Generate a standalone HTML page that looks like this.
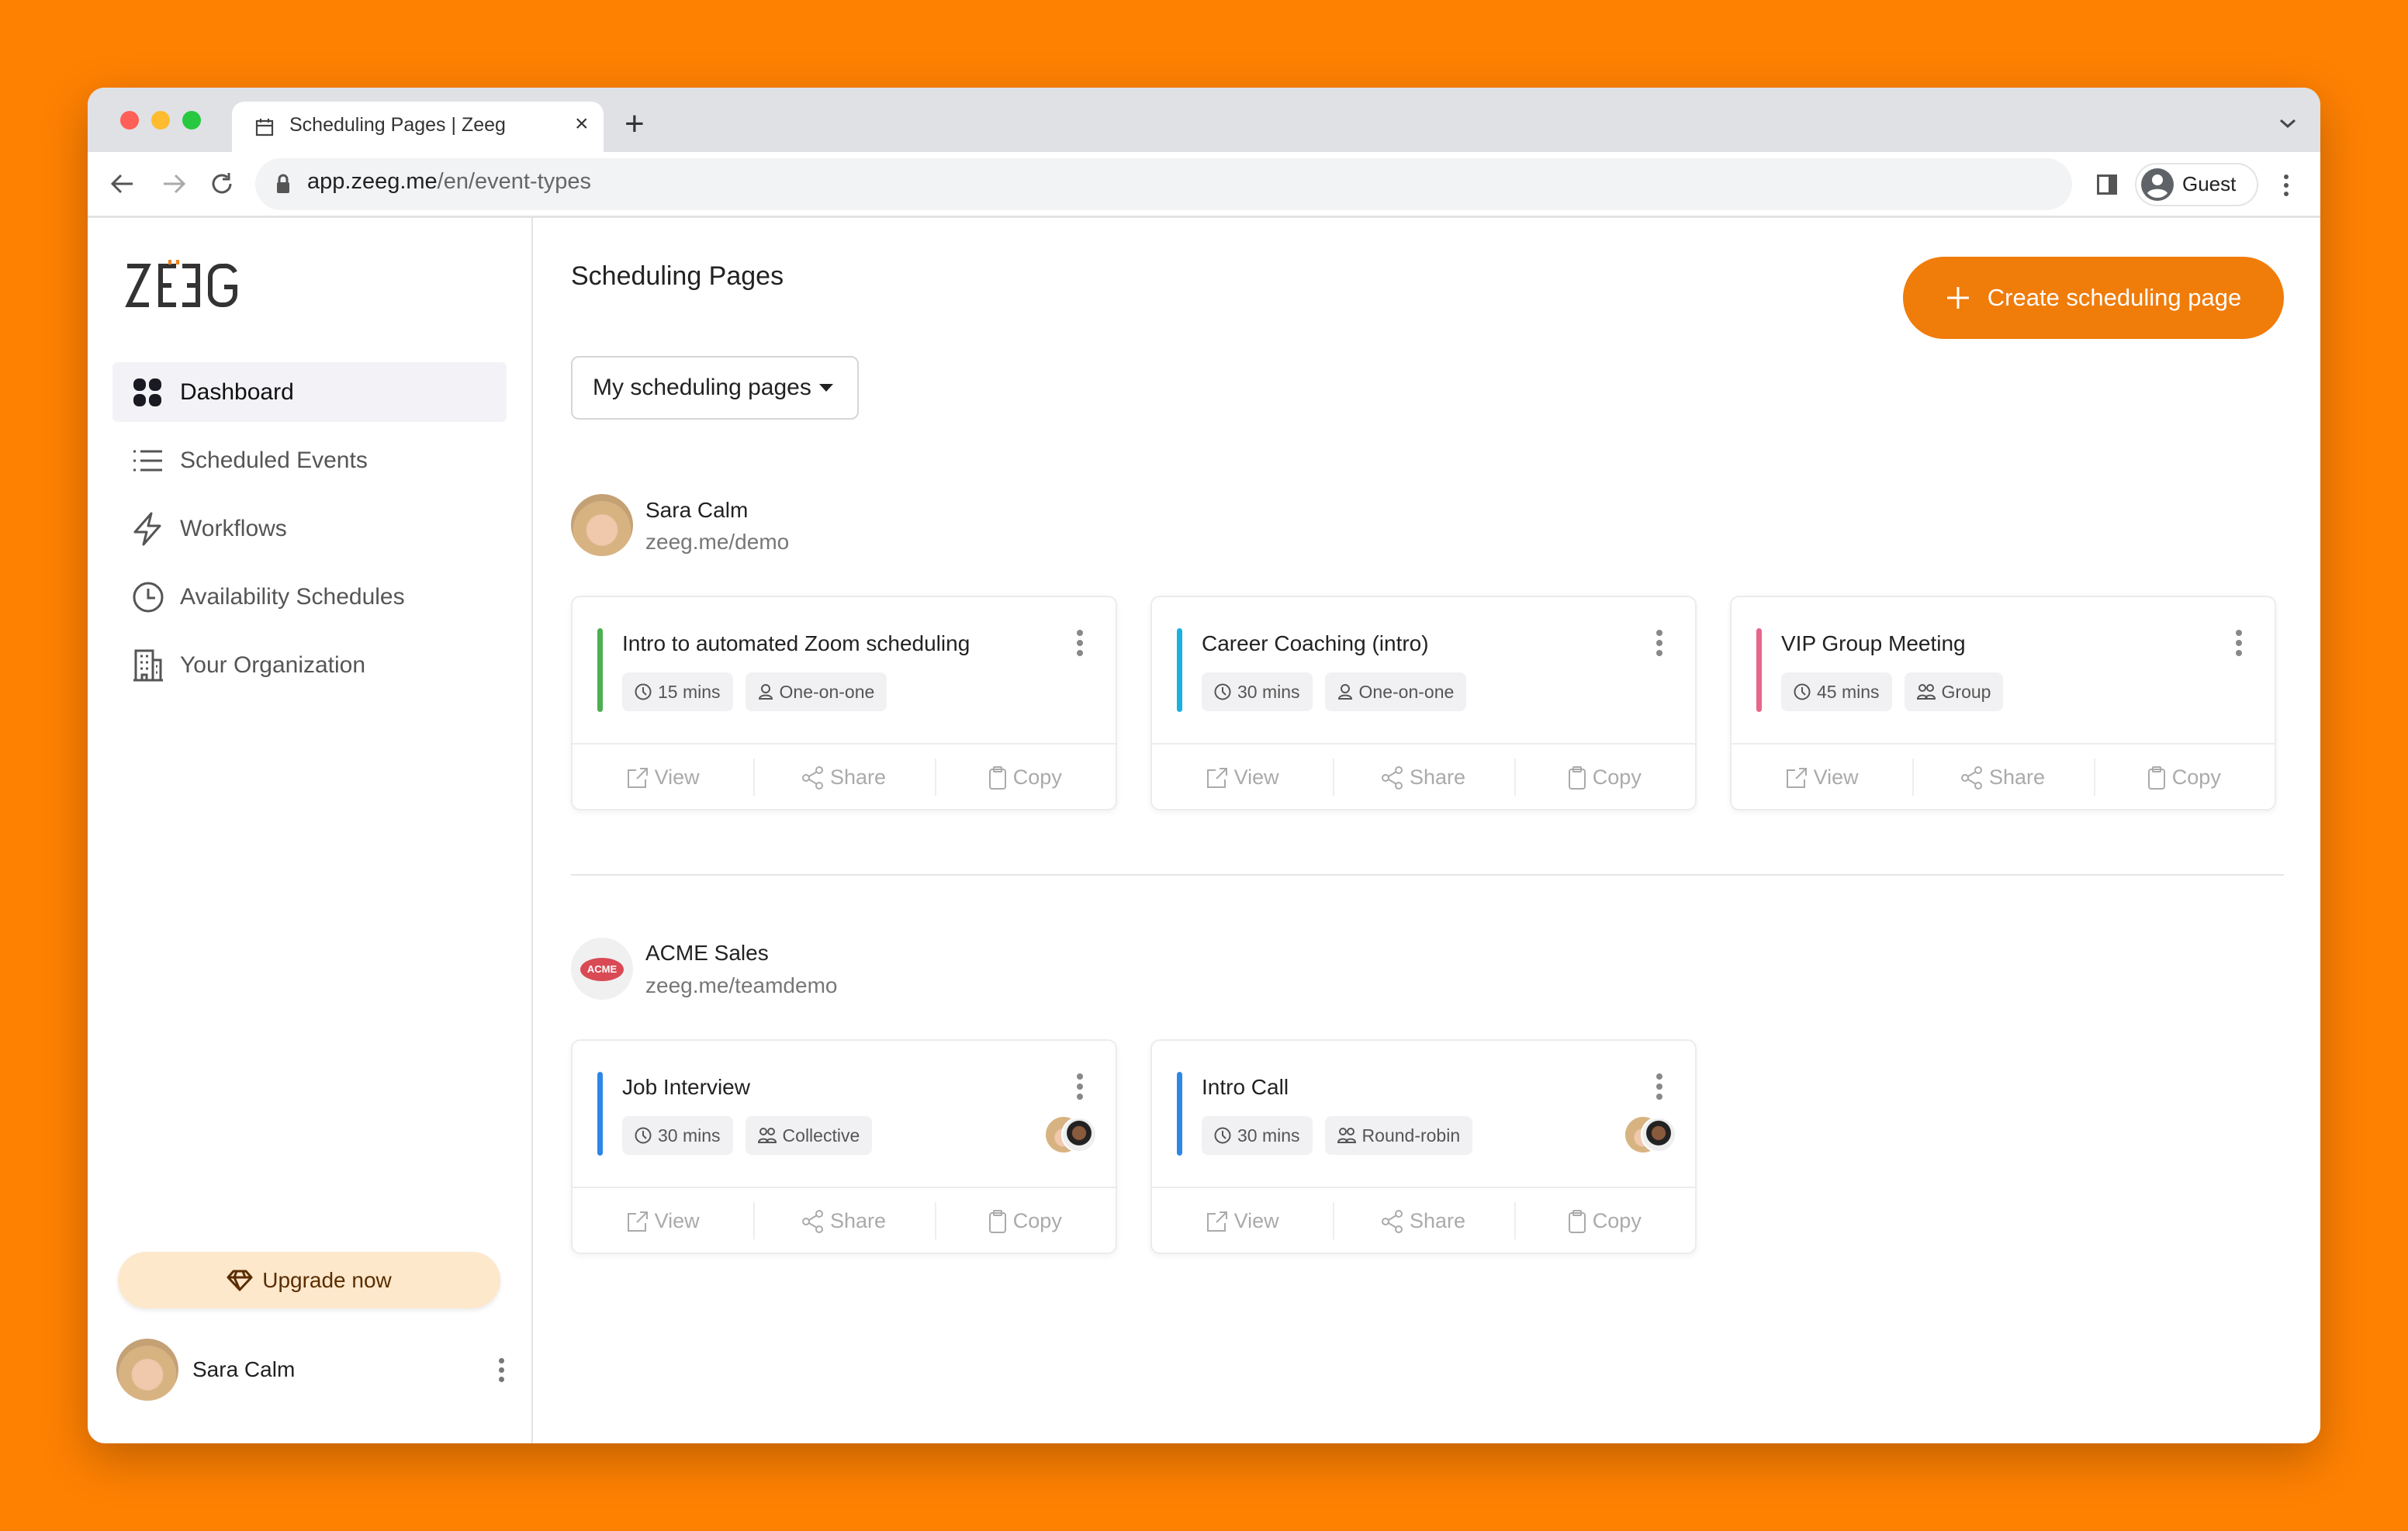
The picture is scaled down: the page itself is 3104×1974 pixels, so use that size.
<!DOCTYPE html>
<html><head><meta charset="utf-8"><style>
*{box-sizing:border-box;margin:0;padding:0}
body{width:3104px;height:1974px;background:#fe8102;font-family:"Liberation Sans",sans-serif;position:relative;overflow:hidden}
.win{position:absolute;left:113px;top:113px;width:2878px;height:1748px;background:#fff;border-radius:22px;overflow:hidden;box-shadow:0 20px 60px rgba(0,0,0,.25)}
.abs{position:absolute}
.tabbar{position:absolute;left:0;top:0;width:100%;height:83px;background:#dfe1e5}
.toolbar{position:absolute;left:0;top:83px;width:100%;height:85px;background:#fff;border-bottom:3px solid #e3e3e3}
.side{position:absolute;left:0;top:168px;width:574px;height:1580px;border-right:2px solid #e3e3e3}
.nav{position:absolute;left:32px;width:508px;height:77px;display:flex;align-items:center;font-size:30px;color:#555}
.nav svg{position:absolute;left:26px}
.nav span{position:absolute;left:87px}
.card{position:absolute;width:704px;height:277px;background:#fff;border:2px solid #ececec;border-radius:12px;box-shadow:0 3px 8px rgba(0,0,0,.05)}
.bar{position:absolute;left:32px;top:40px;width:7px;height:108px;border-radius:4px}
.ttl{position:absolute;left:64px;top:40px;font-size:28px;color:#222;line-height:40px}
.tags{position:absolute;left:64px;top:97px;display:flex;gap:16px}
.tag{height:50px;background:#f1f1f3;border-radius:8px;padding:0 16px;display:flex;align-items:center;gap:8px;font-size:23px;color:#555}
.keb{position:absolute;left:650px;top:42px;width:8px}
.keb i{display:block;width:8px;height:8px;border-radius:50%;background:#888;margin-bottom:5px}
.div{position:absolute;left:0;top:188px;width:100%;border-top:2px solid #ececec}
.acts{position:absolute;left:0;top:190px;width:100%;height:85px;display:flex}
.acts div{flex:1;display:flex;align-items:center;justify-content:center;gap:8px;font-size:27px;color:#aaa;position:relative}
.acts div+div:before{content:"";position:absolute;left:0;top:18px;height:48px;border-left:2px solid #eee}
.pair{position:absolute;left:610px;top:98px;width:66px;height:50px}
.av{position:absolute;border-radius:50%;overflow:hidden}
</style></head><body>
<div class="win">
 <div class="tabbar">
  <div class="abs" style="left:42px;top:30px;width:24px;height:24px;border-radius:50%;background:#fe5f57"></div>
  <div class="abs" style="left:82px;top:30px;width:24px;height:24px;border-radius:50%;background:#febc2e"></div>
  <div class="abs" style="left:122px;top:30px;width:24px;height:24px;border-radius:50%;background:#28c840"></div>
  <div class="abs" style="left:186px;top:18px;width:479px;height:66px;background:#fff;border-radius:16px 16px 0 0"></div>
  <svg class="abs" style="left:215px;top:38px" width="26" height="26" viewBox="0 0 26 26" fill="none" stroke="#444" stroke-width="2.2"><path d="M3 5h20v18H3zM3 11h20M8 2v5M18 2v5"/></svg>
  <div class="abs" style="left:260px;top:34px;font-size:25px;color:#333">Scheduling Pages | Zeeg</div>
  <div class="abs" style="left:628px;top:30px;font-size:30px;color:#333">×</div>
  <div class="abs" style="left:692px;top:22px;font-size:44px;color:#333;font-weight:300">+</div>
  <svg class="abs" style="left:2824px;top:38px" width="24" height="16" viewBox="0 0 24 16"><path d="M3 4l9 8 9-8" fill="none" stroke="#444" stroke-width="3"/></svg>
 </div>
 <div class="toolbar">
  <svg class="abs" style="left:28px;top:24px" width="34" height="34" viewBox="0 0 34 34" fill="none" stroke="#555" stroke-width="3"><path d="M30 17H5M15 6L4 17l11 11"/></svg>
  <svg class="abs" style="left:94px;top:24px" width="34" height="34" viewBox="0 0 34 34" fill="none" stroke="#aaa" stroke-width="3"><path d="M4 17h25M19 6l11 11-11 11"/></svg>
  <svg class="abs" style="left:156px;top:24px" width="34" height="34" viewBox="0 0 34 34" fill="none" stroke="#555" stroke-width="3"><path d="M28 17a11 11 0 1 1-4-8.5"/><path d="M26 3v8h-8" /></svg>
  <div class="abs" style="left:216px;top:8px;width:2342px;height:67px;background:#f1f3f4;border-radius:34px"></div>
  <svg class="abs" style="left:242px;top:27px" width="20" height="28" viewBox="0 0 20 28"><path d="M5 12V8a5 5 0 0 1 10 0v4" fill="none" stroke="#555" stroke-width="3"/><rect x="2" y="12" width="16" height="14" rx="2" fill="#555"/></svg>
  <div class="abs" style="left:283px;top:22px;font-size:29px;color:#222">app.zeeg.me<span style="color:#666">/en/event-types</span></div>
  <div class="abs" style="left:2590px;top:29px;width:26px;height:26px;border:3px solid #555;border-right-width:11px"></div>
  <div class="abs" style="left:2639px;top:14px;width:159px;height:56px;border:2px solid #e3e3e3;border-radius:28px"></div>
  <svg class="abs" style="left:2646px;top:20px" width="44" height="44" viewBox="0 0 44 44"><circle cx="22" cy="22" r="21" fill="#5f6368"/><circle cx="22" cy="16" r="7" fill="#fff"/><path d="M9 33c4-7 22-7 26 0a17 17 0 0 1-26 0z" fill="#fff"/></svg>
  <div class="abs" style="left:2700px;top:26px;font-size:26px;color:#222">Guest</div>
  <div class="abs" style="left:2831px;top:29px;width:6px">
   <i style="display:block;width:6px;height:6px;border-radius:50%;background:#555;margin-bottom:5px"></i><i style="display:block;width:6px;height:6px;border-radius:50%;background:#555;margin-bottom:5px"></i><i style="display:block;width:6px;height:6px;border-radius:50%;background:#555"></i></div>
 </div>

 <div class="side">
  <svg class="abs" style="left:48px;top:52px" width="148" height="64" viewBox="0 0 148 64" fill="none" stroke="#333" stroke-width="6">
   <path d="M3 10h26L5 60h26"/><path d="M66 10H46v50h20M46 35h14"/><path d="M74 10h20v50H74M94 35H80"/><path d="M142 18a14 14 0 0 0-14-8h-4a14 14 0 0 0-14 14v22a14 14 0 0 0 14 14h4a14 14 0 0 0 14-14V37h-14"/>
   <path d="M58 2v6M68 2v6" stroke="#f0821e" stroke-width="4"/>
  </svg>
  <div class="nav" style="top:186px;background:#f3f3f7;border-radius:6px;color:#111">
   <svg width="38" height="38" viewBox="0 0 38 38" fill="#1a1a22"><rect x="1" y="1" width="16" height="16" rx="7"/><rect x="21" y="1" width="16" height="16" rx="7"/><rect x="1" y="21" width="16" height="16" rx="7"/><rect x="21" y="21" width="16" height="16" rx="7"/></svg>
   <span>Dashboard</span></div>
  <div class="nav" style="top:274px"><svg width="38" height="30" viewBox="0 0 38 30" fill="none" stroke="#555" stroke-width="3"><path d="M10 3h28M10 15h28M10 27h28M1 3h3M1 15h3M1 27h3"/></svg><span>Scheduled Events</span></div>
  <div class="nav" style="top:362px"><svg width="38" height="44" viewBox="0 0 38 44" fill="none" stroke="#555" stroke-width="3" stroke-linejoin="round"><path d="M24 2L3 26h15l-4 16 21-24H20z"/></svg><span>Workflows</span></div>
  <div class="nav" style="top:450px"><svg width="40" height="40" viewBox="0 0 40 40" fill="none" stroke="#555" stroke-width="3"><circle cx="20" cy="20" r="18"/><path d="M20 9v12h9"/></svg><span>Availability Schedules</span></div>
  <div class="nav" style="top:538px"><svg width="40" height="42" viewBox="0 0 40 42" fill="none" stroke="#555" stroke-width="3"><path d="M1 40h38M4 40V2h22v38M26 14h10v26M10 9h3M17 9h3M10 17h3M17 17h3M10 25h3M17 25h3M12 40v-7h6v7M30 22h2M30 30h2"/></svg><span>Your Organization</span></div>

  <div class="abs" style="left:39px;top:1333px;width:493px;height:73px;background:#fde8cc;border-radius:37px;box-shadow:0 3px 6px rgba(0,0,0,.08);display:flex;align-items:center;justify-content:center;gap:12px;font-size:28px;color:#5a2d00">
   <svg width="34" height="28" viewBox="0 0 34 28" fill="none" stroke="#5a2d00" stroke-width="3" stroke-linejoin="round"><path d="M9 2h16l7 8-15 16L2 10zM2 10h30M13 2l-3 8 7 16M21 2l3 8"/></svg>Upgrade now</div>
  <div class="av" style="left:37px;top:1445px;width:80px;height:80px;background:radial-gradient(circle at 50% 58%,#f0c8ac 0 32%,#d8b382 34% 60%,#c4a075 62%)"></div>
  <div class="abs" style="left:135px;top:1469px;font-size:28px;color:#222">Sara Calm</div>
  <div class="abs" style="left:530px;top:1470px;width:7px"><i style="display:block;width:7px;height:7px;border-radius:50%;background:#777;margin-bottom:5px"></i><i style="display:block;width:7px;height:7px;border-radius:50%;background:#777;margin-bottom:5px"></i><i style="display:block;width:7px;height:7px;border-radius:50%;background:#777"></i></div>
 </div>

 <!-- main -->
 <div class="abs" style="left:623px;top:224px;font-size:34px;color:#222">Scheduling Pages</div>
 <div class="abs" style="left:2340px;top:218px;width:491px;height:106px;background:#f07c0a;border-radius:53px;display:flex;align-items:center;justify-content:center;gap:22px;font-size:31px;color:#fff">
  <svg width="32" height="32" viewBox="0 0 32 32" stroke="#fff" stroke-width="3"><path d="M16 2v28M2 16h28"/></svg>Create scheduling page</div>
 <div class="abs" style="left:623px;top:346px;width:371px;height:82px;border:2px solid #d6d6d6;border-radius:10px;display:flex;align-items:center;padding-left:26px;font-size:30px;color:#222">My scheduling pages<svg style="margin-left:10px" width="18" height="10" viewBox="0 0 18 10"><path d="M0 0h18L9 10z" fill="#222"/></svg></div>

 <div class="av" style="left:623px;top:524px;width:80px;height:80px;background:radial-gradient(circle at 50% 58%,#f0c8ac 0 32%,#d8b382 34% 60%,#c4a075 62%)"></div>
 <div class="abs" style="left:719px;top:529px;font-size:28px;color:#222">Sara Calm</div>
 <div class="abs" style="left:719px;top:570px;font-size:28px;color:#777">zeeg.me/demo</div>

 <div class="card" style="left:623px;top:655px">
  <div class="bar" style="background:#4caf50"></div>
  <div class="ttl">Intro to automated Zoom scheduling</div>
  <div class="keb"><i></i><i></i><i></i></div>
  <div class="tags"><div class="tag"><svg width="22" height="22" viewBox="0 0 22 22" fill="none" stroke="#555" stroke-width="2"><circle cx="11" cy="11" r="9.5"/><path d="M11 5v6l4 4"/></svg>15 mins</div><div class="tag"><svg width="20" height="22" viewBox="0 0 20 22" fill="none" stroke="#555" stroke-width="2"><circle cx="10" cy="7" r="5"/><path d="M2 20c0-6 16-6 16 0z"/></svg>One-on-one</div></div>
  <div class="div"></div>
  <div class="acts"><div><svg width="28" height="28" viewBox="0 0 28 28" fill="none" stroke="#aaa" stroke-width="2"><path d="M12 4H2v22h22V16M17 2h9v9M26 2L13 15"/></svg>View</div><div><svg width="28" height="30" viewBox="0 0 28 30" fill="none" stroke="#aaa" stroke-width="2"><circle cx="22" cy="5" r="4"/><circle cx="5" cy="15" r="4"/><circle cx="22" cy="25" r="4"/><path d="M9 13l10-6M9 17l10 6"/></svg>Share</div><div><svg width="24" height="30" viewBox="0 0 24 30" fill="none" stroke="#aaa" stroke-width="2"><rect x="2" y="4" width="20" height="25" rx="3"/><rect x="7" y="1" width="10" height="6" rx="1"/></svg>Copy</div></div>
 </div>
 <div class="card" style="left:1370px;top:655px">
  <div class="bar" style="background:#1ab0e0"></div>
  <div class="ttl">Career Coaching (intro)</div>
  <div class="keb"><i></i><i></i><i></i></div>
  <div class="tags"><div class="tag"><svg width="22" height="22" viewBox="0 0 22 22" fill="none" stroke="#555" stroke-width="2"><circle cx="11" cy="11" r="9.5"/><path d="M11 5v6l4 4"/></svg>30 mins</div><div class="tag"><svg width="20" height="22" viewBox="0 0 20 22" fill="none" stroke="#555" stroke-width="2"><circle cx="10" cy="7" r="5"/><path d="M2 20c0-6 16-6 16 0z"/></svg>One-on-one</div></div>
  <div class="div"></div>
  <div class="acts"><div><svg width="28" height="28" viewBox="0 0 28 28" fill="none" stroke="#aaa" stroke-width="2"><path d="M12 4H2v22h22V16M17 2h9v9M26 2L13 15"/></svg>View</div><div><svg width="28" height="30" viewBox="0 0 28 30" fill="none" stroke="#aaa" stroke-width="2"><circle cx="22" cy="5" r="4"/><circle cx="5" cy="15" r="4"/><circle cx="22" cy="25" r="4"/><path d="M9 13l10-6M9 17l10 6"/></svg>Share</div><div><svg width="24" height="30" viewBox="0 0 24 30" fill="none" stroke="#aaa" stroke-width="2"><rect x="2" y="4" width="20" height="25" rx="3"/><rect x="7" y="1" width="10" height="6" rx="1"/></svg>Copy</div></div>
 </div>
 <div class="card" style="left:2117px;top:655px">
  <div class="bar" style="background:#e8668a"></div>
  <div class="ttl">VIP Group Meeting</div>
  <div class="keb"><i></i><i></i><i></i></div>
  <div class="tags"><div class="tag"><svg width="22" height="22" viewBox="0 0 22 22" fill="none" stroke="#555" stroke-width="2"><circle cx="11" cy="11" r="9.5"/><path d="M11 5v6l4 4"/></svg>45 mins</div><div class="tag"><svg width="24" height="22" viewBox="0 0 24 22" fill="none" stroke="#555" stroke-width="2"><circle cx="7" cy="6" r="4"/><circle cx="17" cy="6" r="4"/><path d="M1 20c0-6 12-6 12 0zM11 20c0-6 12-6 12 0z"/></svg>Group</div></div>
  <div class="div"></div>
  <div class="acts"><div><svg width="28" height="28" viewBox="0 0 28 28" fill="none" stroke="#aaa" stroke-width="2"><path d="M12 4H2v22h22V16M17 2h9v9M26 2L13 15"/></svg>View</div><div><svg width="28" height="30" viewBox="0 0 28 30" fill="none" stroke="#aaa" stroke-width="2"><circle cx="22" cy="5" r="4"/><circle cx="5" cy="15" r="4"/><circle cx="22" cy="25" r="4"/><path d="M9 13l10-6M9 17l10 6"/></svg>Share</div><div><svg width="24" height="30" viewBox="0 0 24 30" fill="none" stroke="#aaa" stroke-width="2"><rect x="2" y="4" width="20" height="25" rx="3"/><rect x="7" y="1" width="10" height="6" rx="1"/></svg>Copy</div></div>
 </div>

 <div class="abs" style="left:623px;top:1014px;width:2208px;border-top:2px solid #e6e6e6"></div>

 <div class="av" style="left:623px;top:1096px;width:80px;height:80px;background:#f0f0f0"><div class="abs" style="left:12px;top:26px;width:56px;height:30px;border-radius:50%;background:#d94a55;color:#fff;font-size:13px;font-weight:bold;text-align:center;line-height:30px">ACME</div></div>
 <div class="abs" style="left:719px;top:1100px;font-size:28px;color:#222">ACME Sales</div>
 <div class="abs" style="left:719px;top:1142px;font-size:28px;color:#777">zeeg.me/teamdemo</div>

 <div class="card" style="left:623px;top:1227px">
  <div class="bar" style="background:#2e86e8"></div>
  <div class="ttl">Job Interview</div>
  <div class="keb"><i></i><i></i><i></i></div>
  <div class="tags"><div class="tag"><svg width="22" height="22" viewBox="0 0 22 22" fill="none" stroke="#555" stroke-width="2"><circle cx="11" cy="11" r="9.5"/><path d="M11 5v6l4 4"/></svg>30 mins</div><div class="tag"><svg width="24" height="22" viewBox="0 0 24 22" fill="none" stroke="#555" stroke-width="2"><circle cx="7" cy="6" r="4"/><circle cx="17" cy="6" r="4"/><path d="M1 20c0-6 12-6 12 0zM11 20c0-6 12-6 12 0z"/></svg>Collective</div></div>
  <div class="pair"><div class="av" style="left:0;top:0;width:46px;height:46px;background:radial-gradient(circle at 50% 58%,#f0c8ac 0 32%,#d8b382 34% 60%)"></div><div class="av" style="left:20px;top:0;width:46px;height:46px;border:2px solid #fff;background:radial-gradient(circle at 50% 45%,#8a5a3c 0 28%,#222 30% 50%,#eee 52%)"></div></div>
  <div class="div"></div>
  <div class="acts"><div><svg width="28" height="28" viewBox="0 0 28 28" fill="none" stroke="#aaa" stroke-width="2"><path d="M12 4H2v22h22V16M17 2h9v9M26 2L13 15"/></svg>View</div><div><svg width="28" height="30" viewBox="0 0 28 30" fill="none" stroke="#aaa" stroke-width="2"><circle cx="22" cy="5" r="4"/><circle cx="5" cy="15" r="4"/><circle cx="22" cy="25" r="4"/><path d="M9 13l10-6M9 17l10 6"/></svg>Share</div><div><svg width="24" height="30" viewBox="0 0 24 30" fill="none" stroke="#aaa" stroke-width="2"><rect x="2" y="4" width="20" height="25" rx="3"/><rect x="7" y="1" width="10" height="6" rx="1"/></svg>Copy</div></div>
 </div>
 <div class="card" style="left:1370px;top:1227px">
  <div class="bar" style="background:#2e86e8"></div>
  <div class="ttl">Intro Call</div>
  <div class="keb"><i></i><i></i><i></i></div>
  <div class="tags"><div class="tag"><svg width="22" height="22" viewBox="0 0 22 22" fill="none" stroke="#555" stroke-width="2"><circle cx="11" cy="11" r="9.5"/><path d="M11 5v6l4 4"/></svg>30 mins</div><div class="tag"><svg width="24" height="22" viewBox="0 0 24 22" fill="none" stroke="#555" stroke-width="2"><circle cx="7" cy="6" r="4"/><circle cx="17" cy="6" r="4"/><path d="M1 20c0-6 12-6 12 0zM11 20c0-6 12-6 12 0z"/></svg>Round-robin</div></div>
  <div class="pair"><div class="av" style="left:0;top:0;width:46px;height:46px;background:radial-gradient(circle at 50% 58%,#f0c8ac 0 32%,#d8b382 34% 60%)"></div><div class="av" style="left:20px;top:0;width:46px;height:46px;border:2px solid #fff;background:radial-gradient(circle at 50% 45%,#8a5a3c 0 28%,#222 30% 50%,#eee 52%)"></div></div>
  <div class="div"></div>
  <div class="acts"><div><svg width="28" height="28" viewBox="0 0 28 28" fill="none" stroke="#aaa" stroke-width="2"><path d="M12 4H2v22h22V16M17 2h9v9M26 2L13 15"/></svg>View</div><div><svg width="28" height="30" viewBox="0 0 28 30" fill="none" stroke="#aaa" stroke-width="2"><circle cx="22" cy="5" r="4"/><circle cx="5" cy="15" r="4"/><circle cx="22" cy="25" r="4"/><path d="M9 13l10-6M9 17l10 6"/></svg>Share</div><div><svg width="24" height="30" viewBox="0 0 24 30" fill="none" stroke="#aaa" stroke-width="2"><rect x="2" y="4" width="20" height="25" rx="3"/><rect x="7" y="1" width="10" height="6" rx="1"/></svg>Copy</div></div>
 </div>
</div>
</body></html>
